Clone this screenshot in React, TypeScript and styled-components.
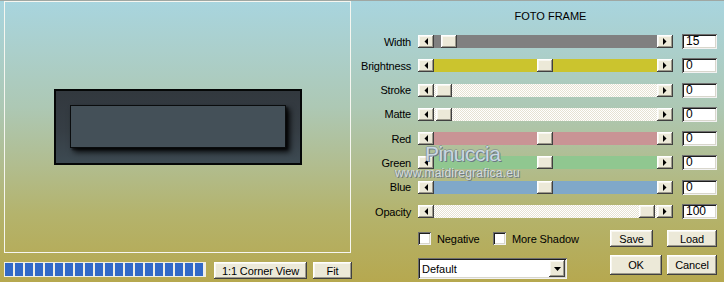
import React from "react";
import styled, { createGlobalStyle, css } from "styled-components";

const Global = createGlobalStyle`
  html, body { margin: 0; padding: 0; }
  body {
    width: 724px; height: 282px; overflow: hidden;
    font-family: "Liberation Sans", Arial, sans-serif;
    font-size: 11px; color: #000;
  }
`;

const raised = css`
  background: #ece9d8;
  box-shadow: inset -1px -1px #404040, inset 1px 1px #ffffff, inset -2px -2px #9d9a8c, inset 2px 2px #f8f7f0;
`;

const sunken = css`
  box-shadow: inset 1px 1px #6f6f6f, inset -1px -1px #f2f2f2, inset 2px 2px #1e1e1e, inset -2px -2px #d8d6cc;
`;

const Root = styled.div`
  position: relative;
  width: 724px;
  height: 282px;
  display: flex;
  background: linear-gradient(to bottom, #a8d5df 0%, #abcfcb 18%, #adc8b4 38%, #b1bd90 58%, #b4b36c 76%, #b6a84f 100%);
  box-shadow: inset 0 1px #9fa7a3;
`;

const LeftColumn = styled.div`
  width: 351px;
  padding: 1px 0 0 4px;
  display: flex;
  flex-direction: column;
`;

const PreviewBox = styled.div`
  box-sizing: border-box;
  width: 347px;
  height: 252px;
  border: 1px solid #f6f6f0;
  display: flex;
  align-items: center;
  justify-content: center;
`;

const FrameOuter = styled.div`
  box-sizing: border-box;
  width: 248px;
  height: 76px;
  border: 2px solid #050707;
  padding: 14px 14px 15px 14px;
  background: linear-gradient(to bottom, #32383e 0%, #363e45 55%, #3d4a52 100%);
`;

const FrameInner = styled.div`
  box-sizing: border-box;
  width: 216px;
  height: 43px;
  border: 1px solid #0a0c0d;
  background: #445058;
  box-shadow: 4px 4px 6px rgba(0, 0, 0, 0.85), 2px 2px 2px rgba(0, 0, 0, 0.6);
`;

const BottomBar = styled.div`
  margin-top: 9px;
  display: flex;
  align-items: flex-start;
`;

const ProgressBar = styled.div`
  box-sizing: border-box;
  width: 202px;
  height: 15px;
  padding: 1px 0 1px 1px;
  background: #eeeee6;
  display: flex;
  gap: 2px;
`;

const ProgressBlock = styled.div`
  width: 8px;
  height: 13px;
  background: #3169c7;
`;

const Button = styled.div<{ $w: number; $h: number; $ml?: number }>`
  ${raised};
  box-sizing: border-box;
  width: ${(p) => p.$w}px;
  height: ${(p) => p.$h}px;
  margin-left: ${(p) => p.$ml ?? 0}px;
  display: flex;
  align-items: center;
  justify-content: center;
  font-size: 11px;
  letter-spacing: -0.1px;
  white-space: nowrap;
`;

const RightPanel = styled.div`
  width: 369px;
  display: flex;
  flex-direction: column;
`;

const Title = styled.div`
  padding: 10px 0 0 22px;
  height: 24px;
  line-height: 13px;
  text-align: center;
  font-size: 11px;
`;

const SliderList = styled.div`
  display: flex;
  flex-direction: column;
  gap: 9.3px;
`;

const Row = styled.div`
  display: flex;
  align-items: center;
  height: 15px;
`;

const Label = styled.div`
  width: 56px;
  margin-right: 7px;
  text-align: right;
  line-height: 12px;
  letter-spacing: -0.2px;
  white-space: nowrap;
`;

const SliderWrap = styled.div`
  width: 255px;
  height: 13px;
  display: flex;
`;

const ArrowButton = styled.div`
  ${raised};
  width: 16px;
  height: 13px;
  flex: none;
  display: flex;
  align-items: center;
  justify-content: center;
`;

const Track = styled.div<{ $bg: string; $pattern?: boolean }>`
  position: relative;
  flex: 1;
  ${(p) =>
    p.$pattern
      ? css`
          background: repeating-conic-gradient(#ffffff 0 25%, #e6e2d2 0 50%) 0 0 / 2px 2px;
        `
      : css`
          background: ${p.$bg};
        `}
`;

const Thumb = styled.div<{ $pos: number }>`
  ${raised};
  position: absolute;
  top: 0;
  left: ${(p) => p.$pos}px;
  width: 16px;
  height: 13px;
`;

const NumberBox = styled.div`
  ${sunken};
  box-sizing: border-box;
  margin-left: 9px;
  width: 35px;
  height: 15px;
  background: #fff;
  padding: 0 0 0 4px;
  line-height: 15px;
  font-size: 12px;
`;

const BottomArea = styled.div`
  margin-top: 11px;
  padding-left: 63px;
  display: grid;
  grid-template-columns: 192px 57px 51px;
  grid-template-rows: 17px 20px;
  row-gap: 8px;
`;

const CheckRow = styled.div`
  display: flex;
  align-items: center;
`;

const CheckItem = styled.label<{ $w?: number }>`
  display: flex;
  align-items: center;
  width: ${(p) => (p.$w ? `${p.$w}px` : "auto")};
  letter-spacing: -0.1px;
`;

const CheckBox = styled.span`
  ${sunken};
  width: 13px;
  height: 13px;
  background: #fff;
  margin-right: 6px;
  flex: none;
`;

const Dropdown = styled.div`
  ${sunken};
  box-sizing: border-box;
  margin-top: 3px;
  width: 149px;
  height: 21px;
  background: #fff;
  display: flex;
  align-items: center;
  justify-content: space-between;
  padding: 0 2px 0 4px;
  font-size: 11px;
`;

const DropButton = styled.div`
  ${raised};
  width: 16px;
  height: 17px;
  display: flex;
  align-items: center;
  justify-content: center;
`;

const Watermark = styled.div`
  position: absolute;
  left: 425px;
  top: 144px;
  height: 20px;
  line-height: 20px;
  font-family: "Liberation Sans", Arial, sans-serif;
  font-size: 21px;
  letter-spacing: -0.5px;
  color: rgba(214, 226, 240, 0.9);
  text-shadow: 1px 1px 0 #6b7a86, -1px 0 0 rgba(110, 125, 135, 0.6), 0 -1px 0 rgba(110, 125, 135, 0.5);
  pointer-events: none;
`;

const WatermarkUrl = styled.div`
  position: absolute;
  left: 395px;
  top: 168px;
  height: 11px;
  line-height: 11px;
  font-family: "Liberation Sans", Arial, sans-serif;
  font-size: 12px;
  letter-spacing: 0.2px;
  color: rgba(225, 232, 240, 0.85);
  text-shadow: 1px 1px 0 #6f7c82, -1px 0 0 rgba(110, 120, 125, 0.5);
  pointer-events: none;
`;

const LeftArrow = () => (
  <svg width="4" height="7" viewBox="0 0 4 7">
    <polygon points="4,0 4,7 0.5,3.5" fill="#000" />
  </svg>
);
const RightArrow = () => (
  <svg width="4" height="7" viewBox="0 0 4 7">
    <polygon points="0,0 0,7 3.5,3.5" fill="#000" />
  </svg>
);
const DownArrow = () => (
  <svg width="7" height="4" viewBox="0 0 7 4">
    <polygon points="0,0 7,0 3.5,4" fill="#000" />
  </svg>
);

type SliderDef = { label: string; bg: string; pattern?: boolean; pos: number; value: string };

const sliders: SliderDef[] = [
  { label: "Width", bg: "#808080", pos: 7, value: "15" },
  { label: "Brightness", bg: "#cbc42e", pos: 103, value: "0" },
  { label: "Stroke", bg: "", pattern: true, pos: 2, value: "0" },
  { label: "Matte", bg: "", pattern: true, pos: 2, value: "0" },
  { label: "Red", bg: "#c99495", pos: 103, value: "0" },
  { label: "Green", bg: "#90c790", pos: 103, value: "0" },
  { label: "Blue", bg: "#80a8c9", pos: 103, value: "0" },
  { label: "Opacity", bg: "", pattern: true, pos: 205, value: "100" },
];

export default function App() {
  return (
    <>
      <Global />
      <Root>
        <LeftColumn>
          <PreviewBox>
            <FrameOuter>
              <FrameInner />
            </FrameOuter>
          </PreviewBox>
          <BottomBar>
            <ProgressBar>
              {Array.from({ length: 20 }).map((_, i) => (
                <ProgressBlock key={i} />
              ))}
            </ProgressBar>
            <Button $w={93} $h={17} $ml={8}>1:1 Corner View</Button>
            <Button $w={39} $h={17} $ml={6}>Fit</Button>
          </BottomBar>
        </LeftColumn>
        <RightPanel>
          <Title>FOTO FRAME</Title>
          <SliderList>
            {sliders.map((s) => (
              <Row key={s.label}>
                <Label>{s.label}</Label>
                <SliderWrap>
                  <ArrowButton><LeftArrow /></ArrowButton>
                  <Track $bg={s.bg} $pattern={s.pattern}>
                    <Thumb $pos={s.pos} />
                  </Track>
                  <ArrowButton><RightArrow /></ArrowButton>
                </SliderWrap>
                <NumberBox>{s.value}</NumberBox>
              </Row>
            ))}
          </SliderList>
          <BottomArea>
            <CheckRow>
              <CheckItem $w={75}><CheckBox />Negative</CheckItem>
              <CheckItem><CheckBox />More Shadow</CheckItem>
            </CheckRow>
            <Button $w={43} $h={17}>Save</Button>
            <Button $w={50} $h={17}>Load</Button>
            <Dropdown>
              <span>Default</span>
              <DropButton><DownArrow /></DropButton>
            </Dropdown>
            <Button $w={52} $h={20}>OK</Button>
            <Button $w={50} $h={20}>Cancel</Button>
          </BottomArea>
        </RightPanel>
        <Watermark>Pinuccia</Watermark>
        <WatermarkUrl>www.maidiregrafica.eu</WatermarkUrl>
      </Root>
    </>
  );
}
